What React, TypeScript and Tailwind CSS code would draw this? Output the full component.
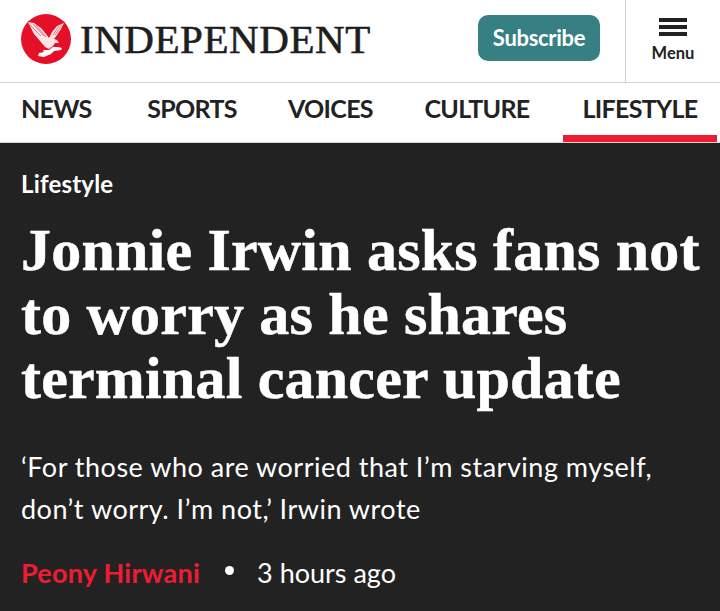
export default function App() {
  const nav = [
    { label: "NEWS", w: "w-[70px]", ml: "ml-[21px]" },
    { label: "SPORTS", w: "w-[90px]", ml: "ml-[56px]" },
    { label: "VOICES", w: "w-[84px]", ml: "ml-[51px]" },
    { label: "CULTURE", w: "w-[106px]", ml: "ml-[52px]" },
  ];
  return (
    <div className="w-[720px] h-[611px] overflow-hidden bg-[#222222] font-['Lato','Noto_Sans',sans-serif]">
      <header className="h-[83px] bg-white border-b border-[#d3d3d3] flex items-center">
        <div className="ml-[21px] w-[50px] h-[50px] shrink-0 mb-[4px]">
          <svg viewBox="0 0 50 50" width="50" height="50">
            <circle cx="25" cy="25" r="25" fill="#e60f28" />
            <path d="M7 8 L13 9 L20 14 L25 20 L28 24 L31 18 L36 12 L43 9 L40 15 L36 21 L33 25 L36 26 L38 29 L34 29 L32 32 L28 35 L24 33 L19 27 L13 20 Z" fill="#ffe3e6" />
            <path d="M9 11 L20 22 M12 10 L23 22 M15 11 L25 23 M38 12 L32 21 M41 11 L34 21" stroke="#ee6a79" strokeWidth="0.9" fill="none" />
            <path d="M22 36 L28 36 L32 33 L37 33 L41 34 L40 36 L33 37 L30 40 L23 43 L17 42 L18 39 L23 38 Z" fill="#fff" />
          </svg>
        </div>
        <div className="ml-[9px] w-[291px] font-['Liberation_Serif',serif] text-[41px] leading-none text-[#1e1e1e] tracking-[0.55px] [-webkit-text-stroke:0.6px_#1e1e1e] whitespace-nowrap mb-[4px]">
          INDEPENDENT
        </div>
        <button className="ml-[107px] mb-[6px] w-[122px] h-[46px] rounded-[10px] bg-[#367f82] text-white font-bold text-[22px] leading-none tracking-[-0.3px] flex items-center justify-center">
          Subscribe
        </button>
        <div className="ml-[25px] h-full flex-1 border-l border-[#d3d3d3] flex flex-col items-center pt-[18px]">
          <div className="w-[28px] flex flex-col gap-[3px]">
            <div className="h-[4px] bg-[#222222]" />
            <div className="h-[4px] bg-[#222222]" />
            <div className="h-[4px] bg-[#222222]" />
          </div>
          <div className="mt-[7px] text-[16.5px] leading-[20px] font-bold text-[#222222]">Menu</div>
        </div>
      </header>
      <nav className="h-[59px] bg-white flex items-start">
        {nav.map((n) => (
          <div key={n.label} className={`${n.ml} ${n.w} text-center whitespace-nowrap pt-[9px] text-[25px] leading-[32px] font-bold text-[#222222] tracking-[-0.7px]`}>
            {n.label}
          </div>
        ))}
        <div className="ml-[33px] w-[154px] h-[59px] border-b-[7px] border-[#ed1c33] text-center whitespace-nowrap pt-[9px] text-[25px] leading-[32px] font-bold text-[#222222] tracking-[-0.7px]">
          LIFESTYLE
        </div>
      </nav>
      <main className="border-t border-[#d3d3d3] bg-[#222222] px-[21px] text-white">
        <div className="pt-[25px] text-[24px] leading-[32px] font-bold tracking-[0.2px]">Lifestyle</div>
        <h1 className="mt-[18px] font-['Liberation_Serif',serif] font-bold text-[60px] leading-[64px] tracking-[0.2px] [-webkit-text-stroke:0.5px_#ffffff] whitespace-nowrap">
          <div>Jonnie Irwin asks fans not</div>
          <div>to worry as he shares</div>
          <div>terminal cancer update</div>
        </h1>
        <p className="mt-[36px] text-[27px] leading-[42px] tracking-[0.5px] whitespace-nowrap">
          <span className="block">‘For those who are worried that I’m starving myself,</span>
          <span className="block">don’t worry. I’m not,’ Irwin wrote</span>
        </p>
        <div className="mt-[25px] flex items-center text-[27px] leading-[36px] whitespace-nowrap">
          <span className="font-bold text-[#ed1c33] tracking-[0.25px]">Peony Hirwani</span>
          <span className="ml-[25px] w-[9px] h-[9px] rounded-full bg-white mb-[6px]" />
          <span className="ml-[23px]">3 hours ago</span>
        </div>
      </main>
    </div>
  );
}
